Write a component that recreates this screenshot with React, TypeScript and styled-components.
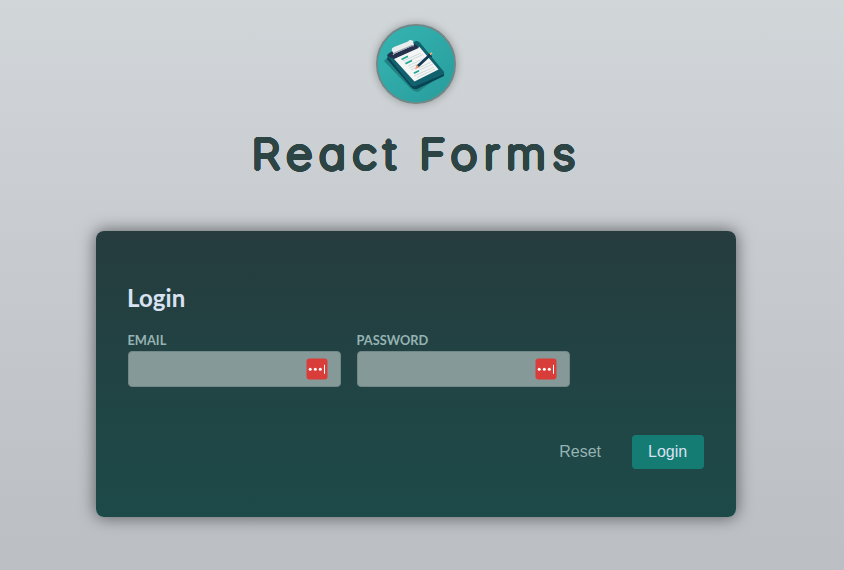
import React from "react";
import styled, { createGlobalStyle } from "styled-components";

// A ring of hard shadows thickens the light letterforms and rounds their terminals.
const roundedStroke = (radius: number, color: string) =>
  Array.from({ length: 24 }, (_, i) => {
    const angle = (i / 24) * Math.PI * 2;
    return `${(Math.cos(angle) * radius).toFixed(2)}px ${(Math.sin(angle) * radius).toFixed(2)}px 0 ${color}`;
  }).join(", ");

const GlobalStyle = createGlobalStyle`
  * { box-sizing: border-box; }
  html { height: 100%; }
  body {
    margin: 0;
    min-height: 570px;
    overflow: hidden;
    font-family: Lato, sans-serif;
    background: linear-gradient(180deg, #d1d6d9 0%, #bbbec3 100%);
  }
`;

const Header = styled.header`
  display: flex;
  flex-direction: column;
  align-items: center;
  width: 832px;
  padding-top: 24px;
`;

const Logo = styled.div`
  width: 80px;
  height: 80px;
  border: 2px solid #728787;
  border-radius: 50%;
  overflow: hidden;
  background: #2ba6a5;
  box-shadow: 0 0 8px rgba(0, 0, 0, 0.3);
  svg { display: block; width: 76px; height: 76px; }
`;

const Title = styled.h1`
  width: 322px;
  height: 60px;
  margin: 20px 0 0;
  font: 200 41.5px/60px Inter, sans-serif;
  font-feature-settings: "cv11" 1;
  letter-spacing: 5.6px;
  word-spacing: -2px;
  white-space: pre;
  color: #2c4444;
  text-shadow: ${roundedStroke(1.6, "#2c4444")};
  transform: translateX(-3.5px) scaleX(1.11);
  transform-origin: left center;
`;

const Form = styled.form`
  display: flex;
  flex-direction: column;
  width: 640px;
  height: 286px;
  margin: 47px 0 0 96px;
  padding: 53px 32px 48px;
  border-radius: 8px;
  background: linear-gradient(180deg, #263c3e 0%, #1d4a49 100%);
  box-shadow: 0 0 16px 1px rgba(0, 0, 0, 0.5);
`;

const FormTitle = styled.h2`
  margin: 0 0 0 -1px;
  font-size: 24px;
  line-height: 28px;
  font-weight: 700;
  letter-spacing: 0.1px;
  color: #d9e2f1;
`;

const Fields = styled.div`
  display: flex;
  gap: 16px;
  margin-top: 20px;
`;

const Field = styled.div`
  position: relative;
  width: 213px;
`;

const Label = styled.label`
  display: block;
  height: 19px;
  margin-left: -0.5px;
  font-size: 12.8px;
  line-height: 16px;
  font-weight: 700;
  text-transform: uppercase;
  color: #96b3b3;
`;

const Input = styled.input`
  display: block;
  width: 100%;
  height: 36px;
  padding: 8px;
  font-size: 16px;
  border: 1px solid #728787;
  border-radius: 4px;
  background: #869999;
  color: #142020;
`;

const Badge = styled.svg`
  position: absolute;
  right: 13px;
  top: 26px;
  width: 22px;
  height: 22px;
`;

const Actions = styled.div`
  display: flex;
  justify-content: flex-end;
  gap: 15px;
  margin-top: 48px;
`;

const Button = styled.button<{ $flat?: boolean }>`
  height: 34px;
  min-width: 72px;
  padding: 0 16px;
  border: 0;
  border-radius: 4px;
  font: 16px/34px "Liberation Sans", Arial, sans-serif;
  text-align: left;
  background: ${(p) => (p.$flat ? "transparent" : "#147c73")};
  color: ${(p) => (p.$flat ? "#96b3b3" : "#d9e2f1")};
`;

const ClipboardIcon = () => (
  <svg viewBox="378 26 76 76" aria-hidden="true">
    <defs>
      <linearGradient id="disc" x1="0" y1="0" x2="1" y2="1">
        <stop offset="0" stopColor="#35b5b2" />
        <stop offset="1" stopColor="#289c9c" />
      </linearGradient>
    </defs>
    <rect x="378" y="26" width="76" height="76" fill="url(#disc)" />
    <path d="M384 61 L388 57 L444 73 L418 92 Q414 92 411 89 Z" fill="#218283" />
    <path d="M389 53.5 L416 42 Q418 41 420 43 L444 72.5 V76 L417 89 Q414 90 411 87 L387 59 Z" fill="#084453" />
    <path d="M389 53 L416 41 Q418 40.5 420 43 L444 72 Q445 74 442 75 L416 86 Q413 87 411 85 L388 57 Q386 55 389 53 Z" fill="#11616f" />
    <path d="M393.5 58.5 L419.5 47 L438.5 69.5 L414.5 81.5 Z" fill="#f4f6f5" />
    <path d="M387 56 L391 52 L413 43 L417 45.5 L418.5 48 L394 59 Z" fill="#24304d" />
    <path d="M392 51 Q391 48 394 47 L408 41.5 Q410 39 413 41 L414 45 L394 54 Z" fill="#e9edee" />
    <path d="M393 55 L394.5 53 L412 45.5 L414 46" fill="none" stroke="#9ca8b0" strokeWidth="1.2" />
    <g fill="none" stroke="#b9c4c8" strokeWidth=".6">
      <path d="M403 61 L421 53 M404.5 63 L423 54.5 M408 66 L425 58 M409.5 68 L421 62.7 M411 70 L416 67.7 M419 68 L431 62 M413 73 L433 64 M414 76 L434 67 M417 77.5 L435 69" />
    </g>
    <path d="M401.5 59.5 L408 56.3 M405.5 63.7 L412 60.5 M414 73.2 L419 70.7" stroke="#21a797" strokeWidth="1.7" />
    <path d="M430.5 54.5 L418 66" stroke="#143b53" strokeWidth="2.8" strokeLinecap="round" />
    <path d="M419.2 67.2 L416.8 64.8 L415 69.5 Z" fill="#ee9b72" />
    <path d="M430 54.5 L432 53" stroke="#e5ba79" strokeWidth="2" />
    <path d="M428 54 L432 57" stroke="#153447" strokeWidth="1" />
  </svg>
);

const PasswordManagerBadge = () => (
  <Badge viewBox="0 0 22 22" aria-hidden="true">
    <rect x=".5" y=".5" width="21" height="21" rx="3" fill="#d93d39" />
    <g fill="#fff">
      <circle cx="4.2" cy="11.2" r="1.5" />
      <circle cx="9.3" cy="11.2" r="1.5" />
      <circle cx="14.3" cy="11.2" r="1.5" />
      <rect x="18" y="6.8" width="1" height="9" />
    </g>
  </Badge>
);

export default function App() {
  return (
    <>
      <GlobalStyle />
      <Header>
        <Logo><ClipboardIcon /></Logo>
        <Title>React Forms</Title>
      </Header>
      <Form onSubmit={(e) => e.preventDefault()}>
        <FormTitle>Login</FormTitle>
        <Fields>
          <Field>
            <Label htmlFor="email">Email</Label>
            <Input id="email" type="email" />
            <PasswordManagerBadge />
          </Field>
          <Field>
            <Label htmlFor="password">Password</Label>
            <Input id="password" type="password" />
            <PasswordManagerBadge />
          </Field>
        </Fields>
        <Actions>
          <Button type="reset" $flat>Reset</Button>
          <Button type="submit">Login</Button>
        </Actions>
      </Form>
    </>
  );
}
